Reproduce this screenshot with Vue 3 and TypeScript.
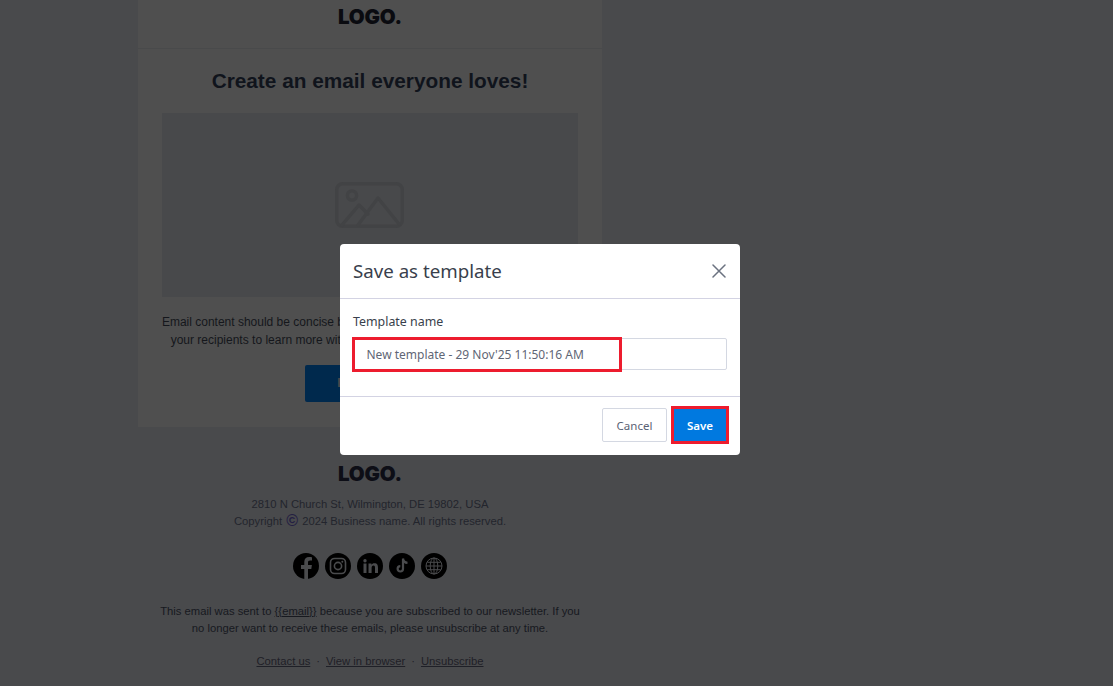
<script setup lang="ts">
const links: string[] = ['Contact us', 'View in browser', 'Unsubscribe']
const openBraces: string = String.fromCharCode(123, 123)
const closeBraces: string = String.fromCharCode(125, 125)
</script>

<template>
  <div class="page">
    <main class="email">
      <section class="card">
        <header class="card-head"><span class="logo">LOGO.</span></header>
        <div class="card-body">
          <h1>Create an email everyone loves!</h1>
          <div class="placeholder">
            <svg class="ph-icon" width="69" height="46" viewBox="0 0 69 46" fill="none" stroke="#424345" stroke-width="3.4" stroke-linejoin="round" stroke-linecap="round">
              <rect x="1.7" y="1.7" width="65.6" height="42.6" rx="6" />
              <circle cx="17" cy="13.5" r="4.6" />
              <path d="M7 43 L24 23 L33 32" />
              <path d="M23 43 L43 16 L64 42" />
            </svg>
          </div>
          <p class="lead">Email content should be concise but informative and clearly states its purpose.<br />your recipients to learn more with one single and clear calls to action today.</p>
          <a class="cta">Learn more</a>
        </div>
      </section>
      <footer class="foot">
        <span class="logo foot-logo">LOGO.</span>
        <p class="address">2810 N Church St, Wilmington, DE 19802, USA<br />Copyright <span class="copy">©</span> 2024 Business name. All rights reserved.</p>
        <div class="social">
          <svg class="soc" viewBox="0 0 26 26"><circle cx="13" cy="13" r="13" fill="#000" /><path d="M15 26V16h3.3l.6-4H15V9.6c0-1.2.5-2 2.1-2H19V4.2c-.5-.1-1.700-.2-2.900-.2-2.900 0-4.800 1.700-4.800 4.900V12H8v4h3.300v10z" fill="#4a4b4d" /></svg>
          <svg class="soc" viewBox="0 0 26 26"><circle cx="13" cy="13" r="13" fill="#000" /><rect x="5.500" y="5.500" width="15" height="15" rx="4" fill="none" stroke="#4a4b4d" stroke-width="1.600" /><circle cx="13" cy="13" r="3.600" fill="none" stroke="#4a4b4d" stroke-width="1.600" /><circle cx="17.300" cy="8.700" r="1" fill="#4a4b4d" /></svg>
          <svg class="soc" viewBox="0 0 26 26"><circle cx="13" cy="13" r="13" fill="#000" /><path d="M6.500 10.500h3V20h-3zM8 6a1.700 1.700 0 1 1 0 3.400A1.700 1.700 0 0 1 8 6zM11.500 10.500h2.900v1.300c.5-.9 1.600-1.500 3-1.500 3 0 3.600 2 3.600 4.500V20h-3v-5c0-1.200-.1-2.400-1.500-2.400s-1.900 1.100-1.900 2.400v5h-3.100z" fill="#4a4b4d" /></svg>
          <svg class="soc" viewBox="0 0 26 26"><circle cx="13" cy="13" r="13" fill="#000" /><path d="M14 5.500v10.300a2.700 2.700 0 1 1-2.700-2.700M14 5.500c.3 2.600 2 4.200 4.500 4.400" fill="none" stroke="#4a4b4d" stroke-width="2.200" /></svg>
          <svg class="soc" viewBox="0 0 26 26"><circle cx="13" cy="13" r="13" fill="#000" /><g fill="none" stroke="#4a4b4d" stroke-width="1"><circle cx="13" cy="13" r="8" /><ellipse cx="13" cy="13" rx="3.800" ry="8" /><path d="M13 5v16M5 13h16M6.300 9.300h13.400M6.300 16.700h13.400" /></g></svg>
        </div>
        <p class="notice">This email was sent to <span class="braces">{{ openBraces }}<u>email</u>{{ closeBraces }}</span> because you are subscribed to our newsletter. If you<br />no longer want to receive these emails, please unsubscribe at any time.</p>
        <nav class="links">
          <template v-for="(l, i) in links" :key="l">
            <span v-if="i > 0" class="dot">·</span>
            <a>{{ l }}</a>
          </template>
        </nav>
      </footer>
    </main>

    <div class="backdrop">
      <div class="modal">
        <div class="modal-head">
          <h2>Save as template</h2>
          <svg class="close" width="14" height="14" viewBox="0 0 14 14" stroke="#6b7280" stroke-width="1.500" stroke-linecap="round"><path d="M1 1l12 12M13 1L1 13" /></svg>
        </div>
        <div class="modal-body">
          <label>Template name</label>
          <div class="field">
            <input value="New template - 29 Nov'25 11:50:16 AM" />
            <span class="mark mark-input"></span>
          </div>
        </div>
        <div class="modal-foot">
          <button class="btn cancel">Cancel</button>
          <div class="save-wrap">
            <button class="btn save">Save</button>
            <span class="mark mark-save"></span>
          </div>
        </div>
      </div>
    </div>
  </div>
</template>

<style>
html, body { margin: 0; background: #494a4c; }
</style>

<style scoped>
.page {
  position: relative;
  height: 686px;
  overflow: hidden;
  background: #494a4c;
  font-family: "Liberation Sans", Arial, sans-serif;
}
.email { width: 464px; margin-left: 138px; }
.card { background: #4f4f4f; height: 427px; }
.card-head {
  height: 42px;
  border-bottom: 1px solid #494a4b;
  display: flex;
  justify-content: center;
  padding-top: 6px;
}
.logo {
  font-family: Inter, sans-serif;
  font-weight: 900;
  font-size: 20.5px;
  line-height: 21px;
  letter-spacing: -0.2px;
  color: #0a0b10;
}
.card-body { display: flex; flex-direction: column; align-items: center; padding: 0 24px; }
h1 {
  margin: 20px 0 0;
  font-size: 20.8px;
  line-height: 24px;
  font-weight: 700;
  color: #10141c;
}
.placeholder {
  margin-top: 20px;
  width: 416px;
  height: 184px;
  background: #48494b;
  display: flex;
  align-items: center;
  justify-content: center;
}
.ph-icon { margin-right: 2px; }
.lead {
  margin: 16px 0 0;
  font-size: 12px;
  line-height: 18px;
  color: #15171c;
  text-align: center;
  white-space: nowrap;
}
.cta {
  margin-top: 16px;
  width: 130px;
  height: 37px;
  line-height: 37px;
  text-align: center;
  background: #00294d;
  color: #4a4b4d;
  border-radius: 2px;
  font-size: 12px;
  font-weight: 700;
}
.foot { display: flex; flex-direction: column; align-items: center; padding-top: 36px; }
.foot-logo { color: #0d0e16; }
.address {
  margin: 12px 0 0;
  font-size: 11.25px;
  line-height: 17px;
  text-align: center;
  color: #23252d;
}
.copy { color: #241f42; font-weight: 700; font-size: 16px; margin: 0 1px; line-height: 1; vertical-align: -1px; }
.social { display: flex; gap: 6px; margin-top: 23px; }
.soc { width: 26px; height: 26px; display: block; }
.notice {
  margin: 24px 0 0;
  font-size: 11.25px;
  line-height: 17px;
  text-align: center;
  color: #17191f;
}
.braces { text-decoration: underline; text-decoration-thickness: 1px; }
.links { margin-top: 16px; font-size: 11.25px; line-height: 17px; color: #1f2027; display: flex; gap: 6px; }
.links a { text-decoration: underline; }

.backdrop { position: absolute; inset: 0; }
.modal {
  position: absolute;
  left: 340px;
  top: 244px;
  width: 400px;
  height: 211px;
  background: #fff;
  border-radius: 4px;
  font-family: "Noto Sans", sans-serif;
  display: flex;
  flex-direction: column;
}
.modal-head {
  height: 54px;
  border-bottom: 1px solid #d3d3e3;
  display: flex;
  align-items: center;
  justify-content: space-between;
  padding: 0 14px 0 13px;
}
h2 { margin: 0 0 2px; font-size: 18.7px; font-weight: 400; color: #393f4c; }
.modal-body { height: 98px; border-bottom: 1px solid #d3d3e3; padding: 14px 13px 0; box-sizing: border-box; }
label { display: block; font-size: 12.4px; line-height: 17px; color: #393f4c; }
.field { position: relative; margin-top: 8px; }
input {
  display: block;
  width: 100%;
  height: 32px;
  box-sizing: border-box;
  border: 1px solid #d4d8e2;
  border-radius: 2px;
  padding: 0 12.5px;
  font: 400 12px "Noto Sans", sans-serif;
  color: #5f6675;
  outline: none;
}
.mark { position: absolute; border: 3px solid #ed1c2e; box-sizing: border-box; }
.mark-input { left: -1px; top: -1px; width: 270px; height: 35px; }
.modal-foot { flex: 1; display: flex; justify-content: flex-end; align-items: center; gap: 6px; padding: 0 13px 2px; }
.btn {
  height: 34px;
  border-radius: 2px;
  font: 400 11.5px "Noto Sans", sans-serif;
  cursor: pointer;
  display: block;
}
.cancel { width: 65px; background: #fff; border: 1px solid #d4d8e2; color: #5a6274; }
.save { width: 54px; background: #0079e0; border: 0; color: #fff; font-weight: 600; }
.save-wrap { position: relative; }
.mark-save { left: -2px; top: -2px; width: 58px; height: 38px; }
</style>
